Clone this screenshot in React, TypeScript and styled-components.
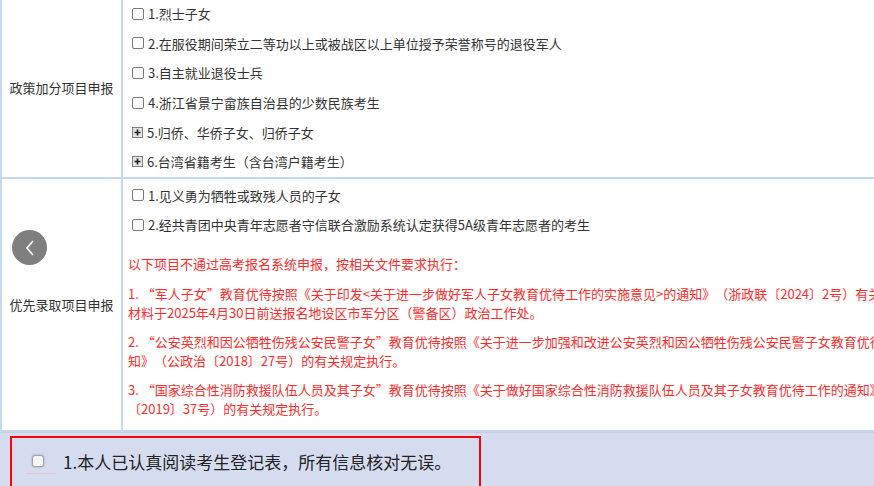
import styled, { createGlobalStyle } from "styled-components";

const GlobalStyle = createGlobalStyle`
	html, body {
		margin: 0;
		padding: 0;
		background: #ffffff;
		overflow: hidden;
	}
	body {
		font-family: "Noto Sans CJK SC", "Microsoft YaHei", sans-serif;
		color: #333;
		text-spacing-trim: space-all;
	}
`;

const Page = styled.div`
	position: relative;
	width: 874px;
	height: 486px;
	overflow: hidden;
	background: #fff;
`;

const Table = styled.div`
	display: flex;
	flex-direction: column;
	width: 873px;
	margin-top: -1px;
	border-left: 2px solid #c5d8ee;
`;

const Row = styled.div`
	display: flex;
	border-bottom: 2px solid #c5d8ee;
`;

const LabelCell = styled.div`
	width: 119px;
	flex-shrink: 0;
	display: flex;
	align-items: center;
	justify-content: center;
	border-right: 2px solid #c5d8ee;
	font-size: 13px;
	color: #333;
`;

const ContentCell = styled.div<{ $pb?: number }>`
	flex: 1;
	min-width: 0;
	padding: 0 0 ${(p) => p.$pb ?? 0}px 9px;
`;

const Item = styled.div`
	height: 29.6px;
	display: flex;
	align-items: center;
	gap: 4px;
	font-size: 13px;
	color: #333;
	white-space: nowrap;
`;

const Box = styled.span`
	width: 10px;
	height: 10px;
	border: 1px solid #7a7a7a;
	border-radius: 2px;
	background: #fff;
	flex-shrink: 0;
`;

const Notice = styled.div<{ $mt: number }>`
	margin-top: ${(p) => p.$mt}px;
	margin-left: -4px;
	font-size: 13px;
	line-height: 18.5px;
	color: #ff2b2b;
	white-space: nowrap;
`;

const Quote = styled.span`
	font-feature-settings: "fwid";
`;

const Footer = styled.div`
	border-top: 1px solid #c9ced8;
	background: #d6dcef;
	padding: 3px 0 0 10px;
	height: 60px;
`;

const ConfirmBox = styled.div`
	width: 467px;
	height: 54px;
	border: 2px solid #ff0000;
	box-sizing: content-box;
	display: flex;
	align-items: flex-start;
`;

const ConfirmInner = styled.div`
	display: flex;
	align-items: center;
	height: 46px;
	padding-left: 20px;
	gap: 19px;
	font-size: 17px;
	color: #222;
`;

const BigBox = styled.span`
	position: relative;
	width: 10px;
	height: 10px;
	border: 1px solid #a5a5a5;
	border-radius: 3px;
	background: #f7f7f7;
	box-shadow: 0 0 2px rgba(0, 0, 0, 0.35);
	&::after {
		content: "";
		position: absolute;
		left: -7px;
		top: 17px;
		width: 30px;
		border-bottom: 1px solid #e7c3cc;
	}
`;

const NavButton = styled.div`
	position: absolute;
	left: 12px;
	top: 230px;
	width: 35px;
	height: 35px;
	border-radius: 50%;
	background: rgba(105, 105, 105, 0.85);
	display: flex;
	align-items: center;
	justify-content: center;
`;

function PlusBox() {
	return (
		<svg width="11" height="11" viewBox="0 0 11 11" style={{ flexShrink: 0 }}>
			<rect x="0.5" y="0.5" width="10" height="10" fill="#e4e4e4" stroke="#808080" />
			<path d="M5.5 2.5v6M2.5 5.5h6" stroke="#1f1f1f" strokeWidth="1.6" />
		</svg>
	);
}

const policyItems = [
	"1.烈士子女",
	"2.在服役期间荣立二等功以上或被战区以上单位授予荣誉称号的退役军人",
	"3.自主就业退役士兵",
	"4.浙江省景宁畲族自治县的少数民族考生",
];

const priorityItems = [
	"1.见义勇为牺牲或致残人员的子女",
	"2.经共青团中央青年志愿者守信联合激励系统认定获得5A级青年志愿者的考生",
];

const notices = [
	{
		no: "1. ",
		title: "军人子女",
		rest: "教育优待按照《关于印发<关于进一步做好军人子女教育优待工作的实施意见>的通知》（浙政联〔2024〕2号）有关规定执行，相关",
		tail: "材料于2025年4月30日前送报名地设区市军分区（警备区）政治工作处。",
	},
	{
		no: "2. ",
		title: "公安英烈和因公牺牲伤残公安民警子女",
		rest: "教育优待按照《关于进一步加强和改进公安英烈和因公牺牲伤残公安民警子女教育优待工作的通",
		tail: "知》（公政治〔2018〕27号）的有关规定执行。",
	},
	{
		no: "3. ",
		title: "国家综合性消防救援队伍人员及其子女",
		rest: "教育优待按照《关于做好国家综合性消防救援队伍人员及其子女教育优待工作的通知》（应急",
		tail: "〔2019〕37号）的有关规定执行。",
	},
];

export default function App() {
	return (
		<Page lang="zh-CN">
			<GlobalStyle />
			<Table>
				<Row>
					<LabelCell>政策加分项目申报</LabelCell>
					<ContentCell>
						{policyItems.map((t) => (
							<Item key={t}>
								<Box />
								{t}
							</Item>
						))}
						<Item>
							<PlusBox />
							5.归侨、华侨子女、归侨子女
						</Item>
						<Item>
							<PlusBox />
							6.台湾省籍考生（含台湾户籍考生）
						</Item>
					</ContentCell>
				</Row>
				<Row>
					<LabelCell>优先录取项目申报</LabelCell>
					<ContentCell $pb={12}>
						<div style={{ height: 2 }} />
						{priorityItems.map((t) => (
							<Item key={t}>
								<Box />
								{t}
							</Item>
						))}
						<Notice $mt={15}>以下项目不通过高考报名系统申报，按相关文件要求执行：</Notice>
						{notices.map((n, i) => (
							<Notice key={n.no} $mt={i === 0 ? 12 : 11}>
								{n.no}
								<Quote>“</Quote>
								{n.title}
								<Quote>”</Quote>
								{n.rest}
								<br />
								{n.tail}
							</Notice>
						))}
					</ContentCell>
				</Row>
			</Table>
			<Footer>
				<ConfirmBox>
					<ConfirmInner>
						<BigBox />
						1.本人已认真阅读考生登记表，所有信息核对无误。
					</ConfirmInner>
				</ConfirmBox>
			</Footer>
			<NavButton>
				<svg width="14" height="20" viewBox="0 0 14 20">
					<path d="M10 3 L4 10 L10 17" fill="none" stroke="#fff" strokeWidth="1.6" />
				</svg>
			</NavButton>
		</Page>
	);
}
